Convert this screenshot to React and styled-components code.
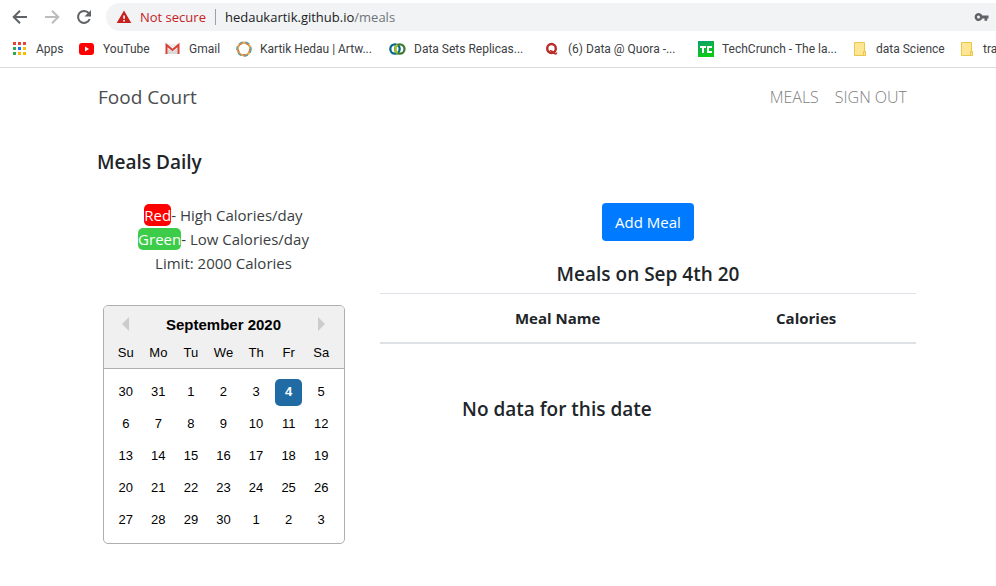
import React from "react";
import styled, { createGlobalStyle } from "styled-components";

const GlobalStyle = createGlobalStyle`
  *, *::before, *::after { box-sizing: border-box; }
  body {
    margin: 0;
    overflow-x: hidden;
    background: #fff;
    color: #212529;
    font-family: "Open Sans", "Noto Sans", sans-serif;
    font-size: 15px;
    line-height: 24px;
  }
  button, input { font: inherit; }
`;

const Browser = styled.header`
  border-bottom: 1px solid #dadce0;
  overflow: hidden;
`;

const Toolbar = styled.div`
  display: flex;
  align-items: center;
  height: 31px;
  padding: 3px 0 0 12px;
`;

const ToolButton = styled.button`
  display: flex;
  width: 16px;
  height: 16px;
  margin-right: 16px;
  padding: 0;
  border: 0;
  background: none;
  color: ${(p) => (p.$dim ? "#babcbe" : "#5f6368")};
`;

const AddressBar = styled.div`
  display: flex;
  flex: 1;
  align-items: center;
  height: 28px;
  margin-left: -2px;
  padding: 0 6px 0 10px;
  border-radius: 14px 0 0 14px;
  background: #f1f3f4;
  font-size: 13px;
`;

const Warning = styled.span`
  display: flex;
  align-items: center;
  gap: 8px;
  padding-right: 9px;
  border-right: 1px solid #9aa0a6;
  color: #c5221f;
  line-height: 16px;
`;

const Url = styled.span`
  flex: 1;
  padding-left: 9px;
  color: #202124;
`;

const UrlPath = styled.span`
  color: #70757a;
`;

const Bookmarks = styled.nav`
  display: flex;
  align-items: center;
  height: 36px;
  padding-left: 12px;
  font-family: Roboto, "Open Sans", sans-serif;
  font-size: 12px;
`;

const Bookmark = styled.a`
  display: flex;
  flex: 0 0 ${(p) => p.$width}px;
  align-items: center;
  gap: 8px;
  color: #3c4043;
  text-decoration: none;
  white-space: nowrap;

  svg { flex: none; }
`;

const Page = styled.div`
  margin: 0 65px 0 82px;
`;

const SiteNav = styled.nav`
  display: flex;
  align-items: center;
  justify-content: space-between;
  height: 58px;
  padding: 0 24px 0 16px;
`;

const Brand = styled.a`
  color: #4a4d50;
  font-size: 19px;
  text-decoration: none;
`;

const NavLinks = styled.div`
  display: flex;
  gap: 16px;
`;

const NavLink = styled.a`
  color: #808080;
  font-size: 16px;
  font-weight: 300;
  text-decoration: none;
`;

const PageTitle = styled.h1`
  margin: 24px 15px 0;
  font-size: 19px;
  font-weight: 600;
`;

const Columns = styled.main`
  display: grid;
  grid-template-columns: 1fr 2fr;
  margin-top: 29px;
`;

const Column = styled.section`
  padding: 0 15px;
  text-align: center;
`;

const Legend = styled.div`
  color: #3a3e42;
`;

const LegendRow = styled.div``;

const Tag = styled.span`
  padding: 1px 0;
  border-radius: 5px;
  background: ${(p) => p.$color};
  color: #fff;
`;

const Calendar = styled.div`
  width: 242px;
  max-width: 100%;
  margin: 30px auto 0;
  overflow: hidden;
  border: 1px solid #aeaeae;
  border-radius: 5px;
  color: #000;
  font-family: "Liberation Sans", Arial, sans-serif;
  font-size: 13px;
`;

const CalendarHead = styled.div`
  height: 63px;
  padding-top: 7px;
  border-bottom: 1px solid #aeaeae;
  background: #f0f0f0;
`;

const MonthBar = styled.div`
  display: flex;
  align-items: center;
  justify-content: space-between;
  padding: 0 16px;
`;

const Month = styled.h2`
  margin: 0;
  font-size: 15px;
  line-height: 24px;
`;

const MonthButton = styled.button`
  display: flex;
  width: 10px;
  height: 18px;
  padding: 0;
  border: 0;
  background: none;
`;

const DayGrid = styled.div`
  display: grid;
  grid-template-columns: repeat(7, 1fr);
  grid-auto-rows: 32px;
  place-items: center;
  padding: ${(p) => p.$padding} 6px;
`;

const Day = styled.button`
  width: 27px;
  height: 27px;
  padding: 0;
  border: 0;
  border-radius: 5px;
  background: ${(p) => (p.$selected ? "#216ba5" : "none")};
  color: ${(p) => (p.$selected ? "#fff" : "#000")};
  font-weight: ${(p) => (p.$selected ? 700 : 400)};
`;

const AddButton = styled.button`
  height: 38px;
  padding: 0 13px;
  border: 0;
  border-radius: 4px;
  background: #007bff;
  color: #fff;
  font-weight: 500;
`;

const Subtitle = styled.h2`
  margin: 0;
  font-size: 19px;
  font-weight: 600;
`;

const DateTitle = styled(Subtitle)`
  margin: 21px 0 7px;
`;

const EmptyMessage = styled(Subtitle)`
  width: 66%;
  margin-top: 53px;
`;

const MealTable = styled.table`
  width: 100%;
  border-collapse: collapse;
  border-top: 1px solid #dee2e6;
  border-bottom: 2px solid #dee2e6;

  th {
    height: 49px;
    font-weight: 700;
  }
  th:first-child {
    width: 59%;
    padding-left: 40px;
  }
`;

const AppsIcon = () => {
  const colors = ["#ea4335", "#ea4335", "#ea4335", "#34a853", "#1a73e8", "#fbbc04", "#34a853", "#fbbc04", "#fbbc04"];
  return (
    <svg width="16" height="16">
      {colors.map((c, i) => (
        <rect key={i} x={1 + (i % 3) * 5} y={1 + Math.floor(i / 3) * 5} width="3" height="3" fill={c} />
      ))}
    </svg>
  );
};

const YouTubeIcon = () => (
  <svg width="16" height="16">
    <rect x="0" y="2" width="15" height="12" rx="3" fill="#f00" />
    <path d="M6 5.5l4 2.5-4 2.5z" fill="#fff" />
  </svg>
);

const GmailIcon = () => (
  <svg width="16" height="16">
    <path d="M1 3h13v10H1z" fill="#ececec" />
    <path d="M3 8l4.5 3L12 8v5H3z" fill="#d9d9d9" />
    <path d="M1.5 13V4l6 5 6-5v9" fill="none" stroke="#d93f34" strokeWidth="2" />
  </svg>
);

const RingIcon = () => (
  <svg width="16" height="16" fill="none">
    <circle cx="8" cy="8" r="6.3" stroke="#e7a54a" strokeWidth="2.2" />
    <circle cx="8" cy="8" r="7.1" stroke="#4c9bb0" strokeWidth="1.2" strokeDasharray="4 3" />
    <circle cx="8" cy="8" r="5.7" stroke="#cf6548" strokeWidth="1" strokeDasharray="3 4" />
  </svg>
);

const DataIcon = () => (
  <svg width="17" height="16" fill="none" strokeWidth="2.3">
    <circle cx="6" cy="8" r="4.7" stroke="#08698c" />
    <circle cx="10.8" cy="8" r="4.7" stroke="#3d7b35" />
    <path d="M8.5 4a4.8 4.8 0 0 0 0 8" stroke="#a2c52c" />
  </svg>
);

const QuoraIcon = () => (
  <svg width="15" height="16" fill="none" stroke="#b92b27">
    <ellipse cx="6.5" cy="7.5" rx="4.3" ry="4.5" strokeWidth="2.4" />
    <path d="M5 9.8c3-.6 3.4 3.2 5.2 3.2 1 0 1.4-.6 1.4-1.5" strokeWidth="1.6" />
  </svg>
);

const TechCrunchIcon = () => (
  <svg width="16" height="16">
    <defs>
      <linearGradient id="tc" x2="0.3" y2="1">
        <stop stopColor="#08a06b" />
        <stop offset="1" stopColor="#0acb18" />
      </linearGradient>
    </defs>
    <path d="M0 0h16v16H0z" fill="url(#tc)" />
    <path d="M2 5h6v2H6v5H4V7H2zM9 5h5v2h-3v3h3v2H9z" fill="#fff" />
  </svg>
);

const FolderIcon = () => (
  <svg width="15" height="16">
    <path d="M1.5 1.5h10v9h1v4h-11z" fill="#ffe694" stroke="#e8c84c" />
    <path d="M10.5 10.5h2v4h-2z" fill="#ffe694" stroke="#e8c84c" />
  </svg>
);

const ToolIcon = ({ d }) => (
  <svg width="16" height="16" fill="none" stroke="currentColor" strokeWidth="2">
    <path d={d} />
  </svg>
);

const WarningIcon = () => (
  <svg width="16" height="16">
    <path d="M8 1.5l7.3 12.5H.7z" fill="#c5221f" />
    <path d="M7.3 6.5h1.6v3.3H7.3zm0 4.5h1.6v1.5H7.3z" fill="#fff" />
  </svg>
);

const KeyIcon = () => (
  <svg width="16" height="16">
    <path
      d="M8.3 6.5h6.2v3h-1.3v2.2h-2.7V9.5H8.3a4 4 0 1 1 0-3zM4.5 6.5a1.5 1.5 0 1 0 0 3 1.5 1.5 0 0 0 0-3z"
      fill="#5f6368"
      fillRule="evenodd"
    />
  </svg>
);

const bookmarks = [
  { label: "Apps", Icon: AppsIcon, width: 67 },
  { label: "YouTube", Icon: YouTubeIcon, width: 86 },
  { label: "Gmail", Icon: GmailIcon, width: 71 },
  { label: "Kartik Hedau | Artw...", Icon: RingIcon, width: 153 },
  { label: "Data Sets Replicas...", Icon: DataIcon, width: 156 },
  { label: "(6) Data @ Quora -...", Icon: QuoraIcon, width: 153 },
  { label: "TechCrunch - The la...", Icon: TechCrunchIcon, width: 155 },
  { label: "data Science", Icon: FolderIcon, width: 107 },
  { label: "tra", Icon: FolderIcon, width: 60 },
];

const weekdays = ["Su", "Mo", "Tu", "We", "Th", "Fr", "Sa"];
const days = [30, 31, ...Array.from({ length: 30 }, (_, i) => i + 1), 1, 2, 3];

export default function App() {
  return (
    <>
      <GlobalStyle />
      <Browser>
        <Toolbar>
          <ToolButton aria-label="Back">
            <ToolIcon d="M15 8H2M8 1.7L1.7 8 8 14.3" />
          </ToolButton>
          <ToolButton $dim aria-label="Forward">
            <ToolIcon d="M1 8h13M8 1.7L14.3 8 8 14.3" />
          </ToolButton>
          <ToolButton aria-label="Reload">
            <svg width="16" height="16">
              <path d="M12.8 4.2A6 6 0 1 0 13.7 10" fill="none" stroke="currentColor" strokeWidth="2" />
              <path d="M15 1v6.5H8.5z" fill="currentColor" />
            </svg>
          </ToolButton>
          <AddressBar>
            <Warning>
              <WarningIcon />
              Not secure
            </Warning>
            <Url>
              hedaukartik.github.io<UrlPath>/meals</UrlPath>
            </Url>
            <KeyIcon />
          </AddressBar>
        </Toolbar>
        <Bookmarks aria-label="Bookmarks">
          {bookmarks.map(({ label, Icon, width }) => (
            <Bookmark key={label} href="#" $width={width}>
              <Icon />
              {label}
            </Bookmark>
          ))}
        </Bookmarks>
      </Browser>
      <Page>
        <SiteNav>
          <Brand href="#">Food Court</Brand>
          <NavLinks>
            <NavLink href="#">MEALS</NavLink>
            <NavLink href="#">SIGN OUT</NavLink>
          </NavLinks>
        </SiteNav>
        <PageTitle>Meals Daily</PageTitle>
        <Columns>
          <Column>
            <Legend>
              <LegendRow>
                <Tag $color="#ff0000">Red</Tag>- High Calories/day
              </LegendRow>
              <LegendRow>
                <Tag $color="#3dcc4a">Green</Tag>- Low Calories/day
              </LegendRow>
              <LegendRow>Limit: 2000 Calories</LegendRow>
            </Legend>
            <Calendar>
              <CalendarHead>
                <MonthBar>
                  <MonthButton aria-label="Previous month">
                    <svg width="10" height="16">
                      <path d="M9 1v14L2 8z" fill="#ccc" />
                    </svg>
                  </MonthButton>
                  <Month>September 2020</Month>
                  <MonthButton aria-label="Next month">
                    <svg width="10" height="16">
                      <path d="M1 1v14l7-7z" fill="#ccc" />
                    </svg>
                  </MonthButton>
                </MonthBar>
                <DayGrid $padding="0">
                  {weekdays.map((d) => (
                    <span key={d}>{d}</span>
                  ))}
                </DayGrid>
              </CalendarHead>
              <DayGrid $padding="7px">
                {days.map((d, i) => (
                  <Day key={i} $selected={i === 5} aria-pressed={i === 5}>
                    {d}
                  </Day>
                ))}
              </DayGrid>
            </Calendar>
          </Column>
          <Column>
            <AddButton>Add Meal</AddButton>
            <DateTitle>Meals on Sep 4th 20</DateTitle>
            <MealTable>
              <thead>
                <tr>
                  <th scope="col">Meal Name</th>
                  <th scope="col">Calories</th>
                </tr>
              </thead>
            </MealTable>
            <EmptyMessage>No data for this date</EmptyMessage>
          </Column>
        </Columns>
      </Page>
    </>
  );
}
